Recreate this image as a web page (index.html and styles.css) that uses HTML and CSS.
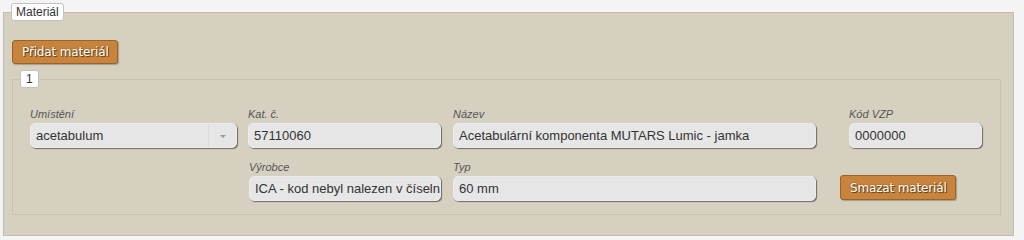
FILE: index.html
```html
<!DOCTYPE html>
<html lang="cs">
<head>
<meta charset="utf-8">
<title>Materiál</title>
<link rel="stylesheet" href="styles.css">
</head>
<body>
<fieldset class="box">
  <legend class="legend">Materiál</legend>
  <div class="box-body">
    <button class="btn" type="button">Přidat materiál</button>
    <fieldset class="item">
      <legend class="legend legend-num">1</legend>
      <div class="item-body">
        <div class="field">
          <label class="lbl">Umístění</label>
          <div class="select">
            <span class="select-val">acetabulum</span>
            <span class="select-arrow"><span class="tri"></span></span>
          </div>
        </div>
        <div class="field">
          <label class="lbl">Kat. č.</label>
          <div class="input">57110060</div>
        </div>
        <div class="field">
          <label class="lbl">Název</label>
          <div class="input">Acetabulární komponenta MUTARS Lumic - jamka</div>
        </div>
        <div class="field field-vzp">
          <label class="lbl">Kód VZP</label>
          <div class="input">0000000</div>
        </div>
        <div class="field empty"></div>
        <div class="field">
          <label class="lbl">Výrobce</label>
          <div class="input">ICA - kod nebyl nalezen v číseln</div>
        </div>
        <div class="field">
          <label class="lbl">Typ</label>
          <div class="input">60 mm</div>
        </div>
        <div class="field field-btn">
          <button class="btn btn-del" type="button">Smazat materiál</button>
        </div>
      </div>
    </fieldset>
  </div>
</fieldset>
</body>
</html>
```
FILE: styles.css
```css
html, body {
  margin: 0;
  background: #f4f4f4;
}
body {
  padding: 3px 10px 0 3px;
  font-family: "Liberation Sans", Arial, sans-serif;
  color: #333;
}
.box {
  margin: 0;
  padding: 0;
  border: 1px solid #c4bdad;
  background: #d6d0c1;
  min-width: 0;
}
.legend {
  margin-left: 7px;
  padding: 0 4px;
  height: 18px;
  box-sizing: border-box;
  line-height: 16px;
  font-size: 12px;
  color: #333;
  background: #fff;
  border: 1px solid #c2c2c2;
  border-radius: 3px;
}
.box-body {
  padding: 19px 12px 20px 8px;
}
.btn {
  display: block;
  margin: 0;
  height: 24px;
  padding: 0 8px 0 9px;
  font-family: "DejaVu Sans", Verdana, sans-serif;
  font-size: 12px;
  letter-spacing: -0.15px;
  color: #fff;
  text-shadow: 1px 1px 0 #6b4418, 0 0 2px #7a4c1c;
  background: #c8843d;
  border: 1px solid #9c6329;
  border-radius: 3px;
  box-shadow: 1px 1px 1px rgba(80, 60, 30, 0.35);
}
.item {
  margin: 6px 0 0 0;
  padding: 0;
  border: 1px solid #c8c1b1;
  min-width: 0;
}
.legend-num {
  margin-left: 7px;
  padding: 0 5px;
}
.item-body {
  display: grid;
  grid-template-columns: 207px 192px 363px 1fr;
  column-gap: 12px;
  row-gap: 12px;
  padding: 19px 0 13px 17px;
}
.item-body > .field:nth-child(2) { margin-left: -1px; }
.lbl {
  display: block;
  height: 14px;
  margin-bottom: 2px;
  font-size: 11px;
  line-height: 14px;
  font-style: italic;
  color: #555;
}
.input, .select {
  box-sizing: border-box;
  height: 25px;
  border-radius: 5px;
  background: #e6e6e6;
  border: 1px solid #ececec;
  box-shadow: 1px 1px 1px #6e6a62;
  font-size: 13px;
  line-height: 23px;
  padding: 0 5px;
  color: #333;
  white-space: nowrap;
  overflow: hidden;
}
.select {
  display: flex;
  padding: 0 0 0 5px;
}
.select-val {
  flex: 1;
}
.select-arrow {
  width: 27px;
  border-left: 1px dotted #cfcfcf;
  display: flex;
  align-items: center;
  justify-content: center;
}
.tri {
  width: 0;
  height: 0;
  border-left: 3px solid transparent;
  border-right: 3px solid transparent;
  border-top: 3px solid #999;
  margin-top: 1px;
}
.field-vzp {
  padding-left: 21px;
}
.field-vzp .input {
  width: 133px;
}
.field-btn {
  padding: 15px 0 0 12px;
}
.btn-del {
  height: 25px;
  padding: 0 8px 0 9px;
}
```
